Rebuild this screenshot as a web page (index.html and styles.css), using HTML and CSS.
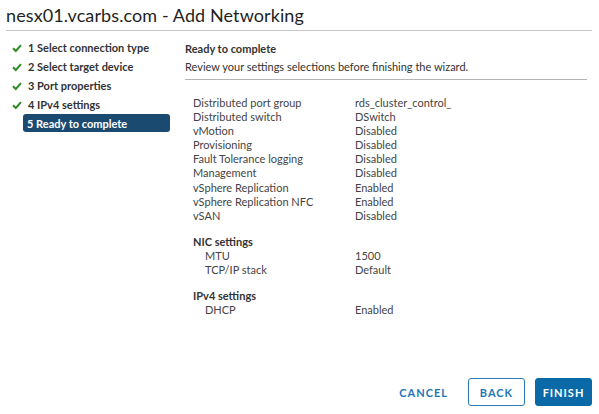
FILE: index.html
```html
<!DOCTYPE html>
<html>
<head>
<meta charset="utf-8">
<link rel="stylesheet" href="styles.css">
</head>
<body>
<div class="dialog">
  <h1 class="title">nesx01.vcarbs.com - Add Networking</h1>
  <div class="body">
    <ul class="steps">
      <li class="step done"><svg class="check" viewBox="0 0 10 10"><path d="M1 5.2 L3.8 8 L9 2.2" /></svg><span>1 Select connection type</span></li>
      <li class="step done"><svg class="check" viewBox="0 0 10 10"><path d="M1 5.2 L3.8 8 L9 2.2" /></svg><span>2 Select target device</span></li>
      <li class="step done"><svg class="check" viewBox="0 0 10 10"><path d="M1 5.2 L3.8 8 L9 2.2" /></svg><span>3 Port properties</span></li>
      <li class="step done"><svg class="check" viewBox="0 0 10 10"><path d="M1 5.2 L3.8 8 L9 2.2" /></svg><span>4 IPv4 settings</span></li>
      <li class="step active"><span>5 Ready to complete</span></li>
    </ul>
    <div class="content">
      <div class="head">
        <div class="head-title">Ready to complete</div>
        <div class="head-desc">Review your settings selections before finishing the wizard.</div>
      </div>
      <div class="summary">
        <div class="row"><span class="k">Distributed port group</span><span class="v">rds_cluster_control_</span></div>
        <div class="row"><span class="k">Distributed switch</span><span class="v">DSwitch</span></div>
        <div class="row"><span class="k">vMotion</span><span class="v">Disabled</span></div>
        <div class="row"><span class="k">Provisioning</span><span class="v">Disabled</span></div>
        <div class="row"><span class="k">Fault Tolerance logging</span><span class="v">Disabled</span></div>
        <div class="row"><span class="k">Management</span><span class="v">Disabled</span></div>
        <div class="row"><span class="k">vSphere Replication</span><span class="v">Enabled</span></div>
        <div class="row"><span class="k">vSphere Replication NFC</span><span class="v">Enabled</span></div>
        <div class="row"><span class="k">vSAN</span><span class="v">Disabled</span></div>
        <div class="group">NIC settings</div>
        <div class="row sub"><span class="k">MTU</span><span class="v">1500</span></div>
        <div class="row sub"><span class="k">TCP/IP stack</span><span class="v">Default</span></div>
        <div class="group">IPv4 settings</div>
        <div class="row sub"><span class="k">DHCP</span><span class="v">Enabled</span></div>
      </div>
    </div>
  </div>
  <div class="footer">
    <button class="btn link">CANCEL</button>
    <button class="btn outline">BACK</button>
    <button class="btn primary">FINISH</button>
  </div>
</div>
</body>
</html>
```
FILE: styles.css
```css
* { box-sizing: border-box; }
html, body { margin: 0; padding: 0; background: #fff; }
body { font-family: Lato, "Open Sans", sans-serif; color: #313131; width: 599px; height: 414px; overflow: hidden; }
.dialog { display: flex; flex-direction: column; height: 414px; padding: 0 7px 0 6px; }
.title { margin: 0; font-weight: 400; font-size: 18px; line-height: 22px; padding-top: 4px; padding-bottom: 4px; color: #1f1f1f; border-bottom: 1px solid #c8c8c8; letter-spacing: 0.1px; }
.body { display: flex; flex: 1; padding-top: 7px; }
.steps { list-style: none; margin: 0; padding: 0; width: 179px; flex: none; }
.step { display: flex; align-items: center; height: 19px; font-size: 11px; font-weight: 700; color: #333; }
.step .check { width: 10px; height: 10px; margin-left: 6px; margin-right: 6px; }
.check path { fill: none; stroke: #2e8a27; stroke-width: 2; }
.step.active { background: #1b4a71; color: #fff; margin-left: 17px; width: 147px; border-radius: 3px; padding-left: 4px; height: 18px; }
.content { flex: 1; padding-right: 5px; }
.head { border-bottom: 1px solid #b5b5b5; padding-bottom: 3px; padding-top: 2px; }
.head-title { font-size: 11px; font-weight: 700; line-height: 18px; color: #333; }
.head-desc { font-size: 11px; line-height: 18px; color: #333; }
.summary { padding-top: 16px; padding-left: 8px; }
.row { display: flex; font-size: 11px; line-height: 14.1px; color: #444; }
.row .k { width: 162px; }
.row.sub .k { padding-left: 12px; }
.group { font-size: 11px; font-weight: 700; line-height: 14px; margin-top: 12px; color: #333; }
.footer { display: flex; justify-content: flex-end; align-items: center; gap: 10px; padding-bottom: 8px; }
.btn { font-family: inherit; font-size: 11px; font-weight: 700; letter-spacing: 1px; height: 28px; border-radius: 3px; padding: 0; cursor: pointer; }
.btn.link { background: none; border: none; color: #1f76b6; padding: 0; margin-right: 10px; }
.btn.outline { background: #fff; border: 1px solid #2a7bb8; color: #1f76b6; width: 57px; }
.btn.primary { background: #0a6aa7; border: 1px solid #0a6aa7; color: #fff; width: 57px; }
```
